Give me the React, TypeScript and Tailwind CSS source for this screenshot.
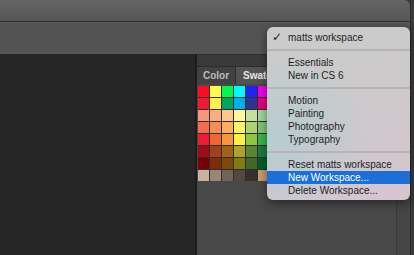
import React from "react";

const swatches: string[][] = [
  ["#ff0a20", "#fffb4f", "#00f94f", "#00fbfd", "#1f24f5", "#ee00ee"],
  ["#ed1a35", "#fff04a", "#00a560", "#00aeea", "#2e3490", "#e4007f"],
  ["#f7977a", "#fbad82", "#fdc68c", "#fff799", "#c4df9b", "#a3d39c"],
  ["#f26c4f", "#f68e56", "#fbaf5c", "#fff467", "#acd372", "#7dc473"],
  ["#ed1c34", "#f26532", "#f7943d", "#fff23e", "#8dc63f", "#39b54a"],
  ["#9e0b1a", "#a0411d", "#a3621a", "#aba32a", "#598537", "#1a7b40"],
  ["#790008", "#7b2e08", "#7d4908", "#827b10", "#406628", "#005e28"],
  ["#c7b29f", "#998675", "#736357", "#534741", "#362f2d", "#c69c6d"],
];

type Item = { label: string; check?: boolean; active?: boolean } | "sep";

const items: Item[] = [
  { label: "matts workspace", check: true },
  "sep",
  { label: "Essentials" },
  { label: "New in CS 6" },
  "sep",
  { label: "Motion" },
  { label: "Painting" },
  { label: "Photography" },
  { label: "Typography" },
  "sep",
  { label: "Reset matts workspace" },
  { label: "New Workspace...", active: true },
  { label: "Delete Workspace..." },
];

export default function App() {
  return (
    <div className="relative w-[414px] h-[255px] overflow-hidden bg-[#3a3a3a] font-['Liberation_Sans',Arial,sans-serif]">
      <div className="flex flex-col w-[411px] h-full border-r border-[#2a2a2a]">
        {/* title bar */}
        <div className="h-[21px] shrink-0 rounded-tr-[6px] bg-gradient-to-b from-[#646464] to-[#565656] border-b border-[#2a2a2a] box-content" />
        {/* options bar */}
        <div className="h-[32px] shrink-0 bg-[#535353] border-t border-[#5e5e5e]" />
        {/* work area */}
        <div className="flex flex-1 min-h-0">
          <div className="w-[195px] bg-[#262626]" />
          <div className="w-[2px] bg-[#1c1c1c]" />
          <div className="w-[199px] flex flex-col bg-[#484848]">
            <div className="h-[12px] shrink-0 bg-[#3a3a3a] border-t border-[#2e2e2e]" />
            <div className="h-[18px] shrink-0 flex bg-[#3d3d3d] border-t border-[#2c2c2c]">
              <div className="w-[39px] flex items-center justify-center bg-[#414141] border-r border-[#2c2c2c] text-[10px] font-bold text-[#bcbcbc]">
                Color
              </div>
              <div className="w-[70px] flex items-center pl-[7px] bg-[#535353] text-[10px] font-bold text-[#e6e6e6]">
                Swatches
              </div>
            </div>
            <div className="pt-[2px] pl-[1px]">
              <div className="grid grid-cols-[repeat(7,11px)] gap-[1px] w-fit bg-[#2e2e2e]">
                {swatches.map((row, r) =>
                  [...row, "#c09a70"].map((c, i) => (
                    <div key={`${r}-${i}`} className="w-[11px] h-[11px]" style={{ backgroundColor: c }} />
                  ))
                )}
              </div>
            </div>
          </div>
          <div className="w-[1px] bg-[#3a3a3a]" />
          <div className="flex-1 bg-[#454545]" />
        </div>
      </div>

      {/* workspace menu */}
      <div className="absolute left-[267px] top-[27px] w-[143px] h-[173px] rounded-[6px] overflow-hidden pt-[4px] text-[10px] text-[#1e1e1e] shadow-[0_3px_10px_rgba(0,0,0,0.45)] bg-[radial-gradient(ellipse_at_0%_65%,rgba(150,210,215,0.45),transparent_55%),linear-gradient(165deg,#cbcbcb_0%,#cccacb_35%,#d6c5cf_100%)]">
        {items.map((it, idx) =>
          it === "sep" ? (
            <div key={idx} className="py-[5px]">
              <div className="h-[2px] bg-[#b6b4b6]" />
            </div>
          ) : (
            <div
              key={idx}
              className={`relative h-[13px] flex items-center pl-[21px] ${it.active ? "bg-[#1b6fd6] text-white" : ""}`}
            >
              {it.check && (
                <span className="absolute left-[5px] top-[-2px] text-[12px] leading-[16px] font-['DejaVu_Sans',sans-serif]">✓</span>
              )}
              {it.label}
            </div>
          )
        )}
      </div>
    </div>
  );
}
